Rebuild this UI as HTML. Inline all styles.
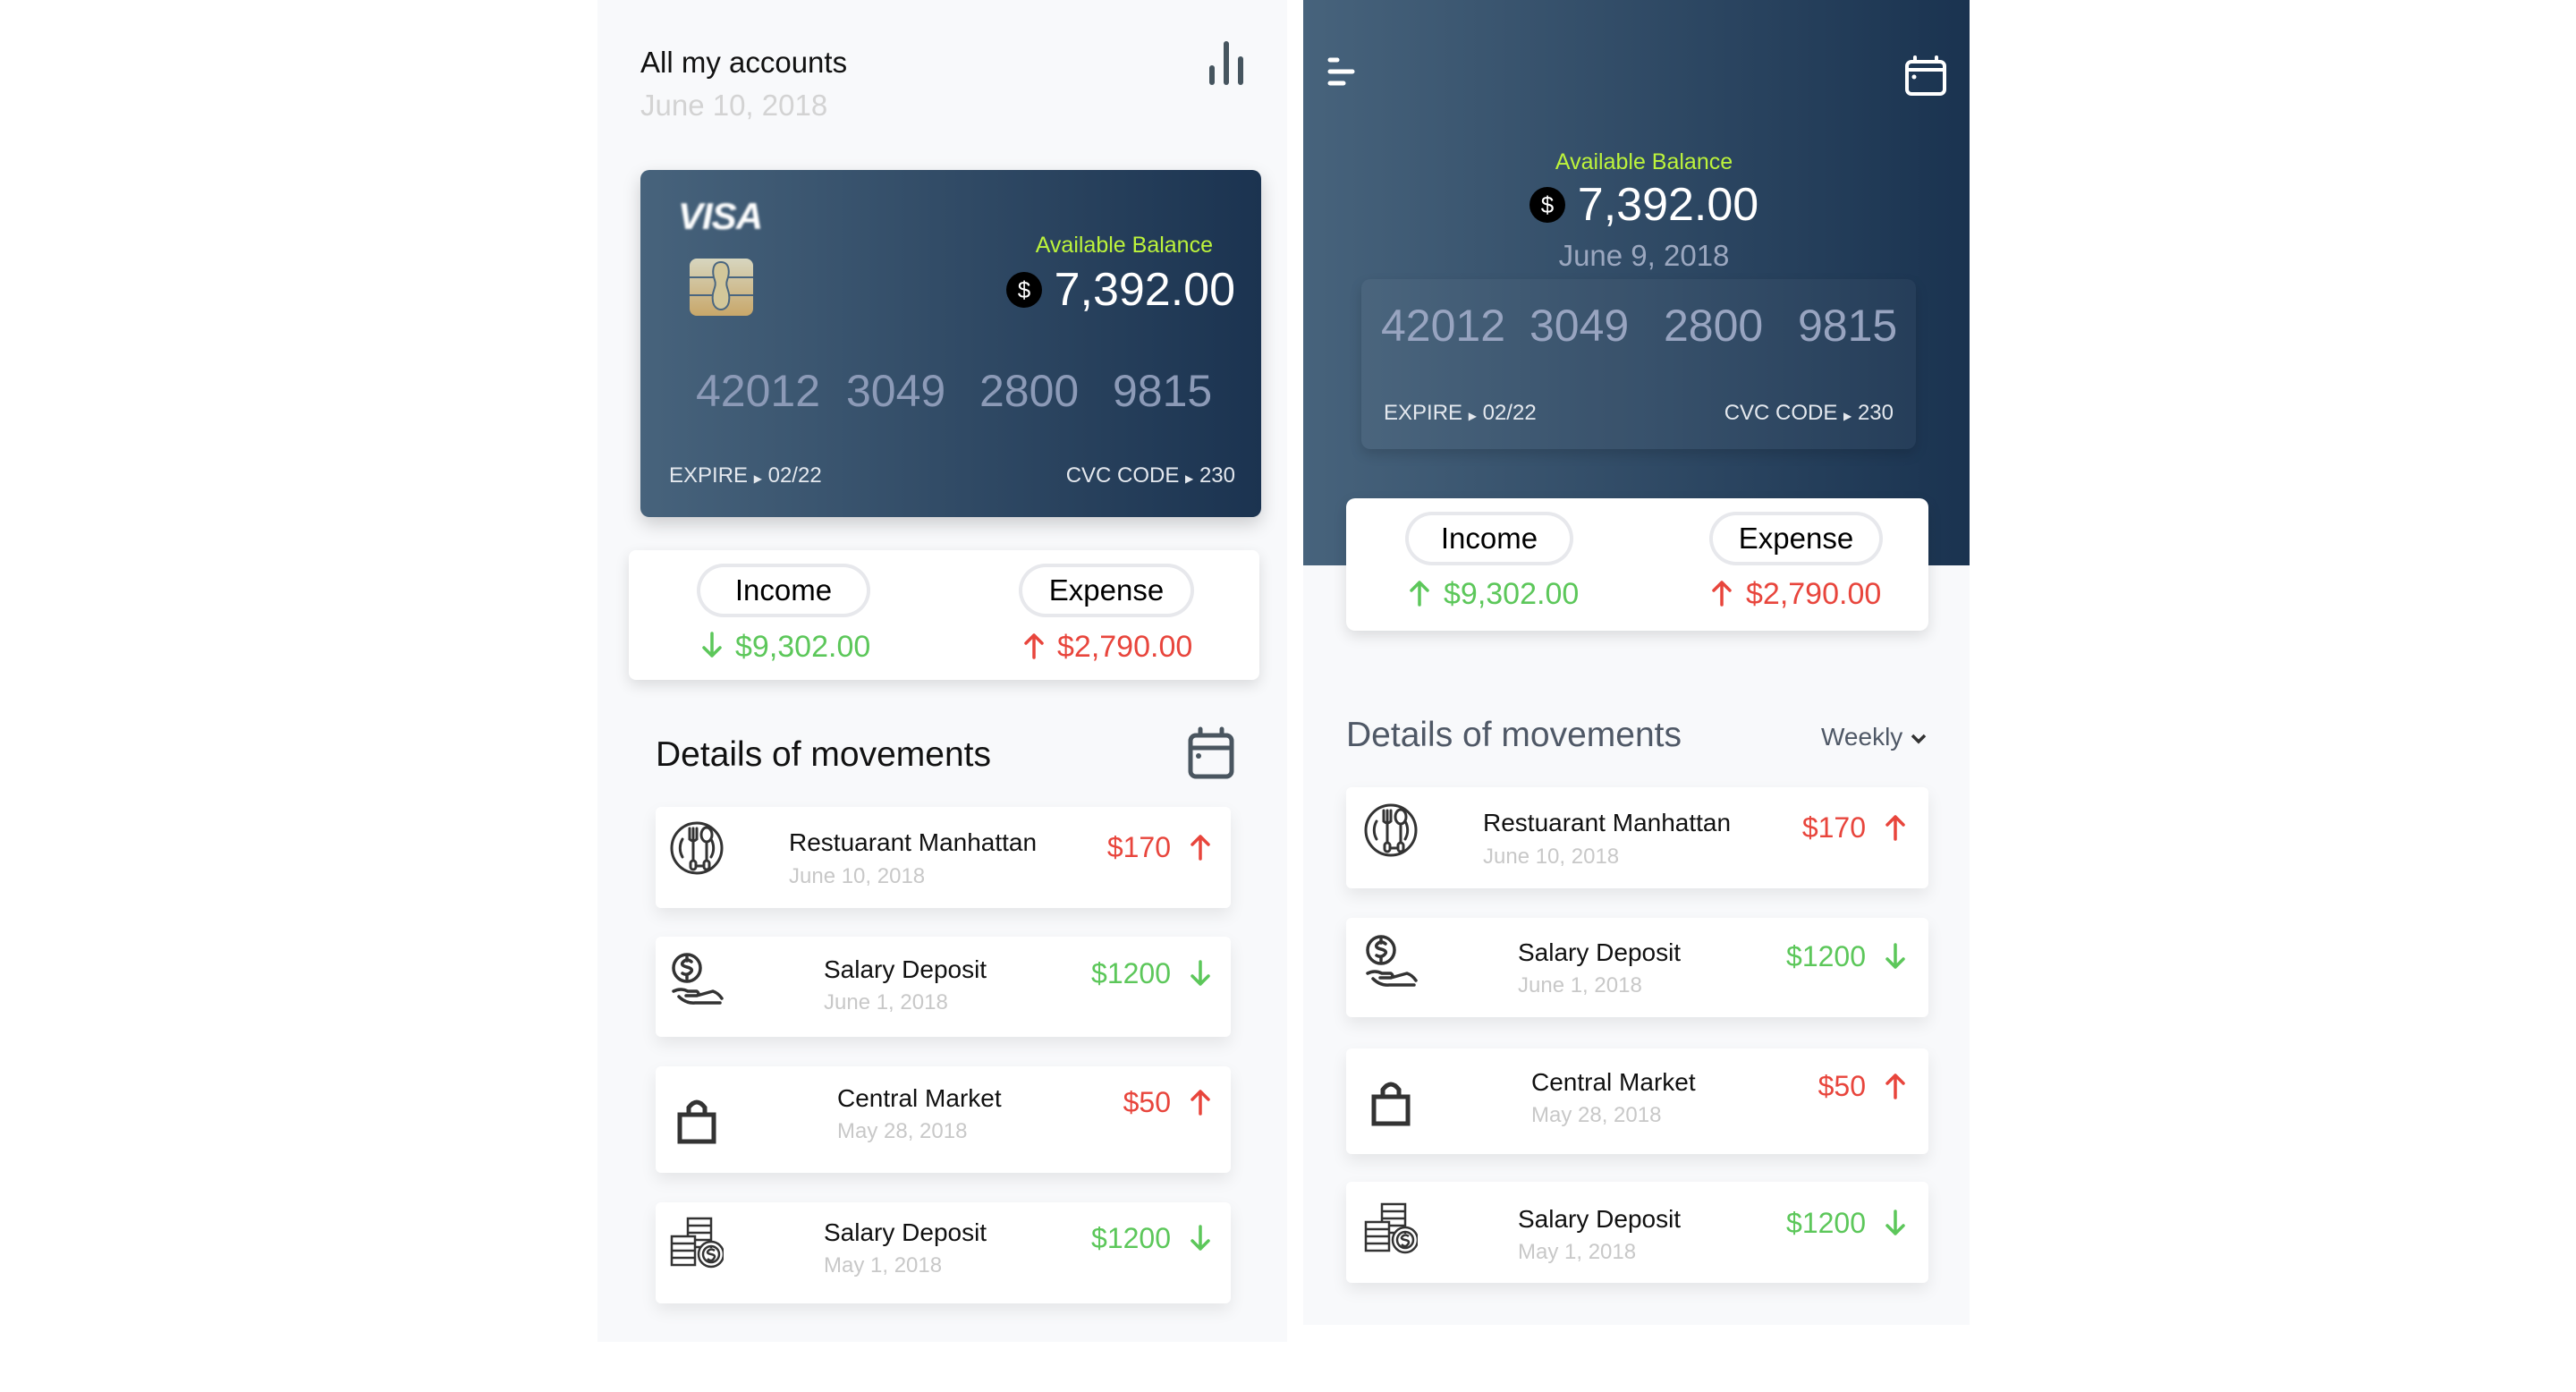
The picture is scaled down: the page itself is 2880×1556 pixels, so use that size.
<!DOCTYPE html>
<html><head><meta charset="utf-8">
<style>
*{margin:0;padding:0;box-sizing:border-box}
html,body{width:2880px;height:1556px;background:#fff;overflow:hidden;font-family:"Liberation Sans",sans-serif}
.a{position:absolute;white-space:nowrap}
.w{position:absolute;top:0;width:2880px;height:1556px}
.panelL{position:absolute;left:672px;top:0;width:771px;height:1500px;background:#f8f9fb}
.panelR{position:absolute;left:1464px;top:0;width:745px;height:1481px;background:#f8f9fb}
.hdr{position:absolute;left:1464px;top:0;width:745px;height:632px;background:linear-gradient(90deg,#47637c,#1a3350)}
.card{position:absolute;left:720px;top:190px;width:694px;height:388px;border-radius:10px;background:linear-gradient(90deg,#47637c,#1b3350);box-shadow:0 8px 20px rgba(0,0,0,.18)}
.box{position:absolute;background:#fff;border-radius:10px;box-shadow:0 6px 16px rgba(0,0,0,.12)}
.pill{position:absolute;background:#fff;border-radius:30px;box-shadow:0 0 0 4px #e7e8ec;font-size:33px;color:#000;text-align:center}
.row{position:absolute;background:#fff;border-radius:6px;box-shadow:0 8px 18px rgba(0,0,0,.08)}
.t{font-size:28px;color:#111}
.d{font-size:24px;color:#c8c8c8}
.g{color:#5cc75a}.r{color:#e8453c}
.num{position:absolute;font-size:50px;color:#8c9ab7}
.amt{font-size:34px}
</style></head><body>
<svg width="0" height="0" style="position:absolute"><defs>
<g id="au" stroke-width="3.5" fill="none" stroke-linecap="round" stroke-linejoin="round"><path d="M12 29V4M3 13l9-9 9 9"/></g>
<g id="ad" stroke-width="3.5" fill="none" stroke-linecap="round" stroke-linejoin="round"><path d="M12 2v25M3 18l9 9 9-9"/></g>
<g id="ir" stroke="#333" stroke-width="3" fill="none" stroke-linecap="round"><circle cx="30" cy="30" r="28"/><path d="M14 20a20 20 0 0 0 0 20M46 20a20 20 0 0 1 0 20"/><path d="M22 8v12M26 8v12M30 8v12M22 20q4 4 8 0M26 22v22"/><rect x="23" y="44" width="6" height="10" rx="3"/><ellipse cx="41" cy="15" rx="6" ry="8"/><path d="M41 23v21"/><rect x="38" y="44" width="6" height="10" rx="3"/><path d="M29 50h9"/></g>
<g id="ih" stroke="#333" stroke-width="3.5" fill="none" stroke-linecap="round" stroke-linejoin="round"><circle cx="19" cy="18" r="15"/><path d="M24 11q-5-4-9 0t4 6 4 6-9 1M19 6v4M19 26v4"/><path d="M4 44q8-4 16 0h10q4 3 0 5h-12M22 49h8l18-5q6 2 10 8M10 50q8 8 18 7l28 0"/></g>
<g id="ib" stroke="#333" stroke-width="5" fill="none"><rect x="11" y="26" width="38" height="30"/><path d="M21 26v-8q9-12 18 0v8"/></g>
<g id="ic" stroke="#333" stroke-width="2.5" fill="none"><rect x="20" y="4" width="26" height="32"/><path d="M20 12h26M20 20h26M20 28h26"/><rect x="2" y="24" width="26" height="32" fill="#fff"/><path d="M2 32h26M2 40h26M2 48h26"/><circle cx="46" cy="44" r="14" fill="#fff"/><circle cx="46" cy="44" r="9"/><path d="M50 40q-4-3-7 0t3 4 3 5-7 0M46 34v3M46 51v3"/></g>
</defs></svg>

<!-- LEFT -->
<div class="w" style="left:-4px">
<div class="panelL"></div>
<div class="a" style="left:720px;top:51px;font-size:33px;color:#111">All my accounts</div>
<div class="a" style="left:720px;top:99px;font-size:33px;color:#d3d3d3">June 10, 2018</div>
<svg class="a" style="left:1350px;top:42px" width="50" height="56" viewBox="0 0 50 56"><g stroke="#46555f" stroke-width="6" stroke-linecap="round"><line x1="9" y1="34" x2="9" y2="50"/><line x1="25" y1="7" x2="25" y2="50"/><line x1="41" y1="24" x2="41" y2="50"/></g></svg>

<div class="card"></div>
<div class="a" style="left:762px;top:218px;font-size:42px;font-weight:bold;font-style:italic;color:#fff;filter:blur(1.2px);letter-spacing:-1px">VISA</div>
<svg class="a" style="left:775px;top:289px" width="71" height="64" viewBox="0 0 71 64"><defs><linearGradient id="ch" x1="0" y1="0" x2="0" y2="1"><stop offset="0" stop-color="#d7d6bf"/><stop offset="1" stop-color="#c8a76a"/></linearGradient></defs><rect width="71" height="64" rx="8" fill="url(#ch)"/><g stroke="#4a6680" stroke-width="2" fill="none"><line x1="0" y1="21" x2="71" y2="21"/><line x1="0" y1="41" x2="71" y2="41"/><path d="M35 4c-10 0-10 12-7 20s-4 12-2 24 16 12 18 0-5-16-2-24 3-20-7-20z" fill="#d3c79a"/></g></svg>
<div class="a" style="right:1520px;top:260px;font-size:25px;color:#bdf43b">Available Balance</div>
<div class="a" style="right:1495px;top:294px;display:flex;align-items:center;gap:14px"><svg width="40" height="40" viewBox="0 0 40 40"><circle cx="20" cy="20" r="20" fill="#000"/><text x="20" y="29" font-size="26" fill="#fff" text-anchor="middle" font-family="Liberation Sans">$</text></svg><span style="font-size:52px;color:#fff">7,392.00</span></div>
<div class="num" style="left:782px;top:408px">42012</div>
<div class="num" style="left:950px;top:408px">3049</div>
<div class="num" style="left:1099px;top:408px">2800</div>
<div class="num" style="left:1248px;top:408px">9815</div>
<div class="a" style="left:752px;top:518px;font-size:24px;color:#e4e8ee">EXPIRE <span style="font-size:12px">&#9654;</span> 02/22</div>
<div class="a" style="right:1495px;top:518px;font-size:24px;color:#e4e8ee">CVC CODE <span style="font-size:12px">&#9654;</span> 230</div>

<div class="box" style="left:707px;top:615px;width:705px;height:145px;border-radius:8px"></div>
<div class="pill" style="left:787px;top:634px;width:186px;height:52px;line-height:52px">Income</div>
<div class="pill" style="left:1147px;top:634px;width:188px;height:52px;line-height:52px">Expense</div>
<svg class="a" style="left:788px;top:706px" width="24" height="32"><use href="#ad" stroke="#5cc75a"/></svg>
<div class="a g amt" style="left:826px;top:704px">$9,302.00</div>
<svg class="a" style="left:1148px;top:706px" width="24" height="32"><use href="#au" stroke="#e8453c"/></svg>
<div class="a r amt" style="left:1186px;top:704px">$2,790.00</div>

<div class="a" style="left:737px;top:822px;font-size:39px;color:#111">Details of movements</div>
<svg class="a" style="left:1332px;top:812px" width="52" height="60" viewBox="0 0 52 60"><g stroke="#4a5660" stroke-width="5" fill="none" stroke-linecap="round"><rect x="3" y="10" width="46" height="46" rx="6"/><line x1="3" y1="24" x2="49" y2="24"/><line x1="14" y1="3" x2="14" y2="10"/><line x1="38" y1="3" x2="38" y2="10"/></g><circle cx="12" cy="33" r="3" fill="#4a5660"/></svg>

<div class="row" style="left:737px;top:902px;width:643px;height:113px"></div>
<svg class="a" style="left:753px;top:918px" width="60" height="60" viewBox="0 0 60 60"><use href="#ir"/></svg>
<div class="a t" style="left:886px;top:926px">Restuarant Manhattan</div>
<div class="a d" style="left:886px;top:966px">June 10, 2018</div>
<div class="a r" style="right:1567px;top:929px;font-size:32px">$170</div>
<svg class="a" style="left:1334px;top:931px" width="24" height="32"><use href="#au" stroke="#e8453c"/></svg>

<div class="row" style="left:737px;top:1047px;width:643px;height:112px"></div>
<svg class="a" style="left:753px;top:1064px" width="60" height="60" viewBox="0 0 60 60"><use href="#ih"/></svg>
<div class="a t" style="left:925px;top:1068px">Salary Deposit</div>
<div class="a d" style="left:925px;top:1107px">June 1, 2018</div>
<div class="a g" style="right:1567px;top:1070px;font-size:32px">$1200</div>
<svg class="a" style="left:1334px;top:1073px" width="24" height="32"><use href="#ad" stroke="#5cc75a"/></svg>

<div class="row" style="left:737px;top:1192px;width:643px;height:119px"></div>
<svg class="a" style="left:753px;top:1220px" width="60" height="60" viewBox="0 0 60 60"><use href="#ib"/></svg>
<div class="a t" style="left:940px;top:1212px">Central Market</div>
<div class="a d" style="left:940px;top:1251px">May 28, 2018</div>
<div class="a r" style="right:1567px;top:1214px;font-size:32px">$50</div>
<svg class="a" style="left:1334px;top:1216px" width="24" height="32"><use href="#au" stroke="#e8453c"/></svg>

<div class="row" style="left:737px;top:1344px;width:643px;height:113px"></div>
<svg class="a" style="left:753px;top:1358px" width="60" height="60" viewBox="0 0 60 60"><use href="#ic"/></svg>
<div class="a t" style="left:925px;top:1362px">Salary Deposit</div>
<div class="a d" style="left:925px;top:1401px">May 1, 2018</div>
<div class="a g" style="right:1567px;top:1366px;font-size:32px">$1200</div>
<svg class="a" style="left:1334px;top:1369px" width="24" height="32"><use href="#ad" stroke="#5cc75a"/></svg>
</div>

<!-- RIGHT -->
<div class="w" style="left:-7px">
<div class="panelR"></div>
<div class="hdr"></div>
<svg class="a" style="left:1489px;top:62px" width="36" height="36" viewBox="0 0 36 36"><g stroke="#fff" stroke-width="5" stroke-linecap="round"><line x1="5" y1="5" x2="13" y2="5"/><line x1="5" y1="18" x2="30" y2="18"/><line x1="5" y1="31" x2="20" y2="31"/></g></svg>
<svg class="a" style="left:2136px;top:62px" width="48" height="46" viewBox="0 0 48 46"><g stroke="#fff" stroke-width="4" fill="none" stroke-linecap="round"><rect x="3" y="7" width="42" height="36" rx="5"/><line x1="3" y1="16" x2="45" y2="16"/><line x1="12" y1="2" x2="12" y2="7"/><line x1="36" y1="2" x2="36" y2="7"/></g><circle cx="11" cy="24" r="2.5" fill="#fff"/></svg>
<div class="a" style="left:1645px;top:167px;width:400px;text-align:center;font-size:25px;color:#bdf43b">Available Balance</div>
<div class="a" style="left:1645px;top:199px;width:400px;display:flex;justify-content:center;align-items:center;gap:14px"><svg width="40" height="40" viewBox="0 0 40 40"><circle cx="20" cy="20" r="20" fill="#000"/><text x="20" y="29" font-size="26" fill="#fff" text-anchor="middle" font-family="Liberation Sans">$</text></svg><span style="font-size:52px;color:#fff">7,392.00</span></div>
<div class="a" style="left:1645px;top:267px;width:400px;text-align:center;font-size:33px;color:#9ba7bf">June 9, 2018</div>
<div class="a" style="left:1529px;top:312px;width:620px;height:190px;border-radius:10px;background:rgba(255,255,255,.04);box-shadow:0 6px 14px rgba(0,0,0,.15)"></div>
<div class="num" style="left:1551px;top:335px;color:#98a4c0">42012</div>
<div class="num" style="left:1717px;top:335px;color:#98a4c0">3049</div>
<div class="num" style="left:1867px;top:335px;color:#98a4c0">2800</div>
<div class="num" style="left:2017px;top:335px;color:#98a4c0">9815</div>
<div class="a" style="left:1554px;top:448px;font-size:24px;color:#e4e8ee">EXPIRE <span style="font-size:12px">&#9654;</span> 02/22</div>
<div class="a" style="right:756px;top:448px;font-size:24px;color:#e4e8ee">CVC CODE <span style="font-size:12px">&#9654;</span> 230</div>

<div class="box" style="left:1512px;top:557px;width:651px;height:148px"></div>
<div class="pill" style="left:1582px;top:576px;width:180px;height:52px;line-height:52px">Income</div>
<div class="pill" style="left:1922px;top:576px;width:186px;height:52px;line-height:52px">Expense</div>
<svg class="a" style="left:1582px;top:647px" width="24" height="32"><use href="#au" stroke="#5cc75a"/></svg>
<div class="a g amt" style="left:1621px;top:645px">$9,302.00</div>
<svg class="a" style="left:1920px;top:647px" width="24" height="32"><use href="#au" stroke="#e8453c"/></svg>
<div class="a r amt" style="left:1959px;top:645px">$2,790.00</div>

<div class="a" style="left:1512px;top:800px;font-size:39px;color:#4f5866">Details of movements</div>
<div class="a" style="left:2043px;top:808px;font-size:28px;color:#4f5866">Weekly <svg width="20" height="14" viewBox="0 0 20 14" style="vertical-align:middle"><path d="M3 3l7 7 7-7" stroke="#333" stroke-width="3.5" fill="none"/></svg></div>

<div class="row" style="left:1512px;top:880px;width:651px;height:113px"></div>
<svg class="a" style="left:1532px;top:898px" width="60" height="60" viewBox="0 0 60 60"><use href="#ir"/></svg>
<div class="a t" style="left:1665px;top:904px">Restuarant Manhattan</div>
<div class="a d" style="left:1665px;top:944px">June 10, 2018</div>
<div class="a r" style="right:787px;top:907px;font-size:32px">$170</div>
<svg class="a" style="left:2114px;top:909px" width="24" height="32"><use href="#au" stroke="#e8453c"/></svg>

<div class="row" style="left:1512px;top:1026px;width:651px;height:111px"></div>
<svg class="a" style="left:1532px;top:1044px" width="60" height="60" viewBox="0 0 60 60"><use href="#ih"/></svg>
<div class="a t" style="left:1704px;top:1049px">Salary Deposit</div>
<div class="a d" style="left:1704px;top:1088px">June 1, 2018</div>
<div class="a g" style="right:787px;top:1051px;font-size:32px">$1200</div>
<svg class="a" style="left:2114px;top:1054px" width="24" height="32"><use href="#ad" stroke="#5cc75a"/></svg>

<div class="row" style="left:1512px;top:1172px;width:651px;height:118px"></div>
<svg class="a" style="left:1532px;top:1200px" width="60" height="60" viewBox="0 0 60 60"><use href="#ib"/></svg>
<div class="a t" style="left:1719px;top:1194px">Central Market</div>
<div class="a d" style="left:1719px;top:1233px">May 28, 2018</div>
<div class="a r" style="right:787px;top:1196px;font-size:32px">$50</div>
<svg class="a" style="left:2114px;top:1198px" width="24" height="32"><use href="#au" stroke="#e8453c"/></svg>

<div class="row" style="left:1512px;top:1321px;width:651px;height:113px"></div>
<svg class="a" style="left:1532px;top:1342px" width="60" height="60" viewBox="0 0 60 60"><use href="#ic"/></svg>
<div class="a t" style="left:1704px;top:1347px">Salary Deposit</div>
<div class="a d" style="left:1704px;top:1386px">May 1, 2018</div>
<div class="a g" style="right:787px;top:1349px;font-size:32px">$1200</div>
<svg class="a" style="left:2114px;top:1352px" width="24" height="32"><use href="#ad" stroke="#5cc75a"/></svg>
</div>
</body></html>
